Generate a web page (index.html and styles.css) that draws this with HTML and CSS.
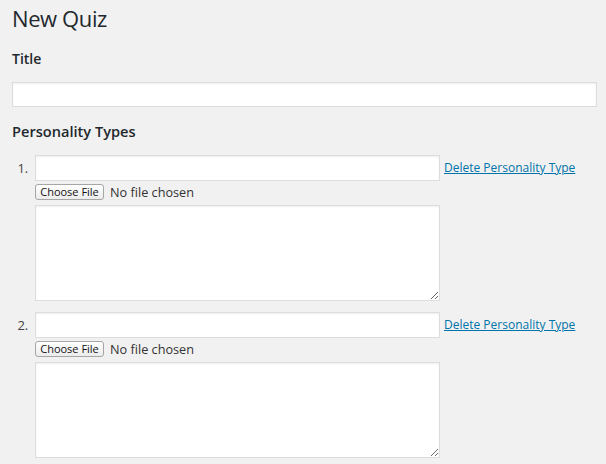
FILE: index.html
```html
<!DOCTYPE html>
<html>
<head>
<meta charset="utf-8">
<link rel="stylesheet" href="styles.css">
</head>
<body>
<div class="wrap">
  <h1 class="page-title">New Quiz</h1>
  <h3 class="section-label">Title</h3>
  <input class="title-input" type="text">
  <h3 class="section-label types-label">Personality Types</h3>
  <ol class="types">
    <li class="type">
      <div class="type-row">
        <input class="type-name" type="text">
        <a class="delete-link" href="#">Delete Personality Type</a>
      </div>
      <div class="file-row">
        <button class="file-btn" type="button">Choose File</button>
        <span class="file-status">No file chosen</span>
      </div>
      <textarea class="type-desc"></textarea>
    </li>
    <li class="type">
      <div class="type-row">
        <input class="type-name" type="text">
        <a class="delete-link" href="#">Delete Personality Type</a>
      </div>
      <div class="file-row">
        <button class="file-btn" type="button">Choose File</button>
        <span class="file-status">No file chosen</span>
      </div>
      <textarea class="type-desc"></textarea>
    </li>
  </ol>
</div>
</body>
</html>
```
FILE: styles.css
```css
html, body {
  margin: 0;
  padding: 0;
  background: #f1f1f1;
}
body {
  font-family: "Open Sans", "Noto Sans", sans-serif;
  color: #23282d;
  font-size: 13px;
}
.wrap {
  padding: 0 9px 0 12px;
}
.page-title {
  font-size: 22px;
  letter-spacing: -0.4px;
  font-weight: 400;
  line-height: 29px;
  margin: 0;
  padding: 4px 0 0 0;
}
.section-label {
  font-size: 14px;
  font-weight: 600;
  line-height: 20px;
  margin: 16px 0 0 0;
}
.types-label {
  margin-top: 14px;
  font-size: 14.6px;
}
.title-input {
  display: block;
  box-sizing: border-box;
  width: 585px;
  height: 25px;
  margin: 13px 0 0 0;
  border: 1px solid #ddd;
  background: #fff;
  box-shadow: inset 0 1px 2px rgba(0,0,0,0.07);
  padding: 3px 5px;
  outline: none;
}
.types {
  margin: 14px 0 0 0;
  padding: 0 0 0 23px;
  color: #444;
  font-size: 13px;
}
.type {
  margin: 0 0 11px 0;
  line-height: 20px;
}
.type::marker {
  content: counter(list-item) ".  ";
  color: #444;
}
.type-row {
  display: flex;
  align-items: center;
  gap: 4px;
}
.type-name {
  box-sizing: border-box;
  width: 405px;
  height: 26px;
  margin: 0;
  border: 1px solid #ddd;
  background: #fff;
  box-shadow: inset 0 1px 2px rgba(0,0,0,0.07);
  padding: 3px 5px;
  outline: none;
}
.delete-link {
  color: #0073aa;
  text-decoration: underline;
  font-size: 12px;
  line-height: 18px;
}
.file-row {
  display: flex;
  align-items: center;
  gap: 6px;
  margin-top: 2px;
  height: 18px;
}
.file-btn {
  box-sizing: border-box;
  height: 16px;
  width: 69px;
  padding: 0;
  margin: 0;
  font-family: "Open Sans", "Noto Sans", sans-serif;
  font-size: 11px;
  line-height: 14px;
  color: #111;
  border: 1px solid #a6a6a6;
  border-radius: 3px;
  background: linear-gradient(#ffffff, #ececec);
}
.file-status {
  font-size: 12.7px;
  color: #333;
}
.type-desc {
  display: block;
  box-sizing: border-box;
  width: 405px;
  height: 96px;
  margin: 4px 0 0 0;
  border: 1px solid #ddd;
  background: #fff;
  box-shadow: inset 0 1px 2px rgba(0,0,0,0.07);
  outline: none;
}
```
